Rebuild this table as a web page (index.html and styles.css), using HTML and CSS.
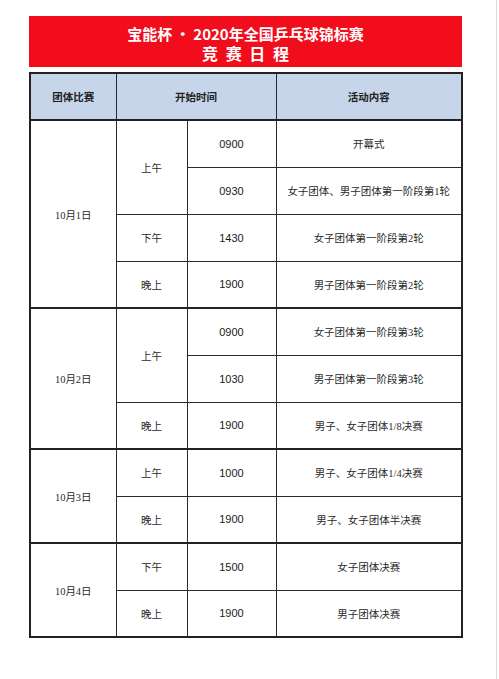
FILE: index.html
```html
<!DOCTYPE html>
<html lang="zh">
<head>
<meta charset="utf-8">
<title>竞赛日程</title>
<link rel="stylesheet" href="styles.css">
</head>
<body>
<div class="page">
  <div class="banner">
    <div class="title">宝能杯&thinsp;·&thinsp;2020年全国乒乓球锦标赛</div>
    <div class="subtitle">竞 赛 日 程</div>
  </div>
  <table class="schedule">
    <colgroup>
      <col class="c-day">
      <col class="c-period">
      <col class="c-time">
      <col class="c-event">
    </colgroup>
    <thead>
      <tr>
        <th>团体比赛</th>
        <th colspan="2">开始时间</th>
        <th>活动内容</th>
      </tr>
    </thead>
    <tbody class="day">
      <tr>
        <td rowspan="4" class="date">10月1日</td>
        <td rowspan="2" class="period">上午</td>
        <td class="time">0900</td>
        <td class="event">开幕式</td>
      </tr>
      <tr>
        <td class="time">0930</td>
        <td class="event">女子团体、男子团体第一阶段第1轮</td>
      </tr>
      <tr>
        <td class="period">下午</td>
        <td class="time">1430</td>
        <td class="event">女子团体第一阶段第2轮</td>
      </tr>
      <tr>
        <td class="period">晚上</td>
        <td class="time">1900</td>
        <td class="event">男子团体第一阶段第2轮</td>
      </tr>
    </tbody>
    <tbody class="day">
      <tr>
        <td rowspan="3" class="date">10月2日</td>
        <td rowspan="2" class="period">上午</td>
        <td class="time">0900</td>
        <td class="event">女子团体第一阶段第3轮</td>
      </tr>
      <tr>
        <td class="time">1030</td>
        <td class="event">男子团体第一阶段第3轮</td>
      </tr>
      <tr>
        <td class="period">晚上</td>
        <td class="time">1900</td>
        <td class="event">男子、女子团体1/8决赛</td>
      </tr>
    </tbody>
    <tbody class="day">
      <tr>
        <td rowspan="2" class="date">10月3日</td>
        <td class="period">上午</td>
        <td class="time">1000</td>
        <td class="event">男子、女子团体1/4决赛</td>
      </tr>
      <tr>
        <td class="period">晚上</td>
        <td class="time">1900</td>
        <td class="event">男子、女子团体半决赛</td>
      </tr>
    </tbody>
    <tbody class="day">
      <tr>
        <td rowspan="2" class="date">10月4日</td>
        <td class="period">下午</td>
        <td class="time">1500</td>
        <td class="event">女子团体决赛</td>
      </tr>
      <tr>
        <td class="period">晚上</td>
        <td class="time">1900</td>
        <td class="event">男子团体决赛</td>
      </tr>
    </tbody>
  </table>
</div>
</body>
</html>
```

FILE: styles.css
```css
html, body {
  margin: 0;
  padding: 0;
  background: #ffffff;
}

.page {
  width: 497px;
  height: 679px;
  border-right: 1px solid #dcdcdc;
  box-sizing: border-box;
  padding: 16px 0 0 29px;
}

.banner {
  width: 433px;
  height: 51px;
  background: #f20d1c;
  color: #ffffff;
  font-family: "Noto Sans CJK SC", "Noto Sans", sans-serif;
  font-weight: 700;
  font-size: 15px;
  line-height: 20px;
  text-align: center;
  display: flex;
  flex-direction: column;
  justify-content: center;
  padding-top: 3px;
  box-sizing: border-box;
}

.subtitle {
  font-size: 16px;
  line-height: 19px;
  letter-spacing: 2px;
  padding-left: 2px;
}

.schedule {
  margin-top: 5px;
  width: 432px;
  border-collapse: collapse;
  table-layout: fixed;
  border: 2px solid #222222;
  color: #222222;
}

.c-day { width: 86px; }
.c-period { width: 71px; }
.c-time { width: 89px; }
.c-event { width: 186px; }

.schedule th,
.schedule td {
  border: 1px solid #2a2a2a;
  text-align: center;
  vertical-align: middle;
  padding: 0;
}

.schedule tr {
  height: 47px;
}

.schedule th {
  background: #c6d5ea;
  font-family: "Noto Sans CJK SC", sans-serif;
  font-weight: 700;
  font-size: 10.5px;
  border-bottom: 2px solid #222222;
}

.day {
  border-top: 2px solid #222222;
}

.date,
.period,
.event {
  font-family: "Liberation Serif", "Noto Sans CJK SC", serif;
  font-size: 10.5px;
  color: #2a2a2a;
}

.time {
  font-family: "Liberation Sans", "Noto Sans", sans-serif;
  font-size: 11px;
  color: #1a1a1a;
}
```
